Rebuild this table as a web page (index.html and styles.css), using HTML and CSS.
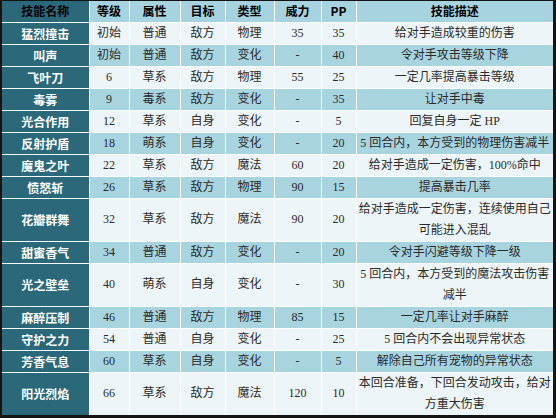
FILE: index.html
```html
<!DOCTYPE html>
<html lang="zh-CN">
<head>
<meta charset="utf-8">
<title>技能表</title>
<link rel="stylesheet" href="styles.css">
</head>
<body>
<div class="frame">
  <table class="skills">
    <colgroup>
      <col class="w-name"><col class="w-lv"><col class="w-attr"><col class="w-tgt"><col class="w-type"><col class="w-pow"><col class="w-pp"><col class="w-desc">
    </colgroup>
    <thead>
      <tr class="head">
        <th class="name">技能名称</th><th>等级</th><th>属性</th><th>目标</th><th>类型</th><th>威力</th><th>PP</th><th>技能描述</th>
      </tr>
    </thead>
    <tbody>
      <tr><th class="name">猛烈撞击</th><td>初始</td><td>普通</td><td>敌方</td><td>物理</td><td>35</td><td>35</td><td>给对手造成较重的伤害</td></tr>
      <tr class="alt"><th class="name">叫声</th><td>初始</td><td>普通</td><td>敌方</td><td>变化</td><td>-</td><td>40</td><td>令对手攻击等级下降</td></tr>
      <tr><th class="name">飞叶刀</th><td>6</td><td>草系</td><td>敌方</td><td>物理</td><td>55</td><td>25</td><td>一定几率提高暴击等级</td></tr>
      <tr class="alt"><th class="name">毒雾</th><td>9</td><td>毒系</td><td>敌方</td><td>变化</td><td>-</td><td>35</td><td>让对手中毒</td></tr>
      <tr><th class="name">光合作用</th><td>12</td><td>草系</td><td>自身</td><td>变化</td><td>-</td><td>5</td><td>回复自身一定 HP</td></tr>
      <tr class="alt"><th class="name">反射护盾</th><td>18</td><td>萌系</td><td>自身</td><td>变化</td><td>-</td><td>20</td><td>5 回合内，本方受到的物理伤害减半</td></tr>
      <tr><th class="name">魔鬼之叶</th><td>22</td><td>草系</td><td>敌方</td><td>魔法</td><td>60</td><td>20</td><td>给对手造成一定伤害，100%命中</td></tr>
      <tr class="alt"><th class="name">愤怒斩</th><td>26</td><td>草系</td><td>敌方</td><td>物理</td><td>90</td><td>15</td><td>提高暴击几率</td></tr>
      <tr><th class="name">花瓣群舞</th><td>32</td><td>草系</td><td>敌方</td><td>魔法</td><td>90</td><td>20</td><td><div class="ln">给对手造成一定伤害，连续使用自己</div><div class="ln">可能进入混乱</div></td></tr>
      <tr class="alt"><th class="name">甜蜜香气</th><td>34</td><td>普通</td><td>敌方</td><td>变化</td><td>-</td><td>20</td><td>令对手闪避等级下降一级</td></tr>
      <tr><th class="name">光之壁垒</th><td>40</td><td>萌系</td><td>自身</td><td>变化</td><td>-</td><td>30</td><td><div class="ln">5 回合内，本方受到的魔法攻击伤害</div><div class="ln">减半</div></td></tr>
      <tr class="alt"><th class="name">麻醉压制</th><td>46</td><td>普通</td><td>敌方</td><td>物理</td><td>85</td><td>15</td><td>一定几率让对手麻醉</td></tr>
      <tr><th class="name">守护之力</th><td>54</td><td>普通</td><td>自身</td><td>变化</td><td>-</td><td>25</td><td>5 回合内不会出现异常状态</td></tr>
      <tr class="alt"><th class="name">芳香气息</th><td>60</td><td>草系</td><td>自身</td><td>变化</td><td>-</td><td>5</td><td>解除自己所有宠物的异常状态</td></tr>
      <tr><th class="name">阳光烈焰</th><td>66</td><td>草系</td><td>敌方</td><td>魔法</td><td>120</td><td>10</td><td><div class="ln">本回合准备，下回合发动攻击，给对</div><div class="ln">方重大伤害</div></td></tr>
    </tbody>
  </table>
</div>
</body>
</html>
```

FILE: styles.css
```css
html, body {
  margin: 0;
  padding: 0;
  background: #111;
}

.frame {
  width: 556px;
  height: 418px;
  box-sizing: border-box;
  padding: 1px 3px 4px 2px;
  background: #141414;
}

.skills {
  width: 551px;
  table-layout: fixed;
  border-collapse: collapse;
  border-spacing: 0;
  font-family: "Liberation Serif", "Noto Sans CJK SC", serif;
  font-size: 12px;
  color: #2a2a2a;
}

.w-name { width: 87px; }
.w-lv { width: 40px; }
.w-attr { width: 51px; }
.w-tgt { width: 45px; }
.w-type { width: 49px; }
.w-pow { width: 47px; }
.w-pp { width: 35px; }
.w-desc { width: 197px; }

.skills th,
.skills td {
  padding: 0;
  height: 21px;
  line-height: 21px;
  text-align: center;
  vertical-align: middle;
  white-space: nowrap;
  border: 1px solid #ffffff;
  background: #eef5f8;
  font-weight: normal;
  box-sizing: border-box;
}

.ln {
  display: block;
  width: 100%;
  text-align: center;
}

.skills tr > :first-child { border-left: 0; }
.skills tr > :last-child { border-right: 0; }
.skills thead th { border-top: 0; height: 21px; line-height: 20px; }
.skills tbody tr:last-child > * { border-bottom: 0; }

.skills tr.alt td {
  background: #a8d4e0;
}

.skills th.name {
  background: #2a687a;
  color: #ffffff;
  font-family: "Noto Sans CJK SC", sans-serif;
  font-weight: bold;
}

.skills thead th {
  background: #a6d3df;
  color: #000;
  font-family: "Noto Sans CJK SC", sans-serif;
  font-weight: bold;
}

.skills thead th.name {
  background: #2a687a;
  color: #000;
}
```
